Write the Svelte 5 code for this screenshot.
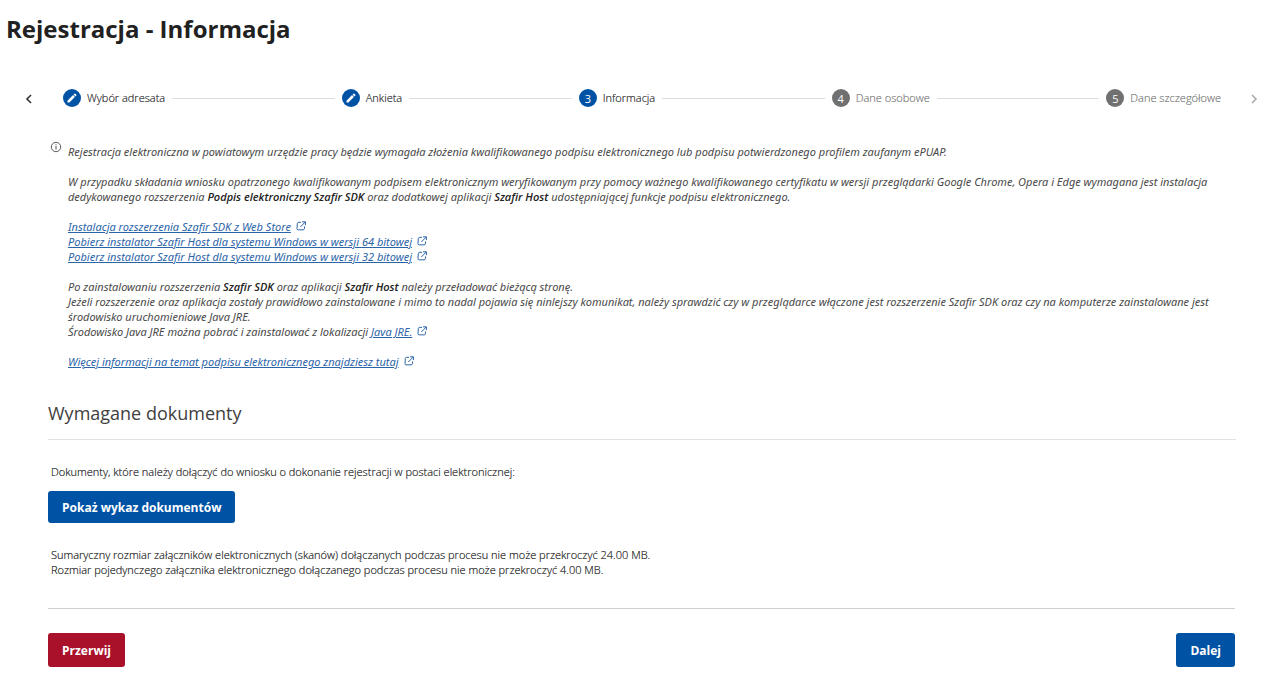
<script>
  const steps = [
    { label: 'Wybór adresata', state: 'done' },
    { label: 'Ankieta', state: 'done' },
    { label: 'Informacja', state: 'current' },
    { label: 'Dane osobowe', state: 'todo' },
    { label: 'Dane szczegółowe', state: 'todo' }
  ];
</script>

{#snippet external()}
  <svg class="external" viewBox="0 0 12 12" aria-hidden="true">
    <path d="M6 1.6H3.2Q1.8 1.6 1.6 3L1.2 9Q1.1 10.6 2.6 10.6H8.6Q9.9 10.6 10.1 9.2L10.3 6.5M7.2 1h4.1v4M11.3 1 5.2 7.2" fill="none" stroke="currentColor" stroke-width="1.2" />
  </svg>
{/snippet}

<main>
  <h1>Rejestracja - Informacja</h1>

  <nav aria-label="Etapy rejestracji">
    <button class="arrow" aria-label="Poprzedni">
      <svg viewBox="0 0 8 12"><path d="M6 2 2 6l4 4" fill="none" stroke="currentColor" stroke-width="1.6" /></svg>
    </button>
    <ol>
      {#each steps as step, i}
        {#if i > 0}<li class="line" aria-hidden="true"></li>{/if}
        <li class="step {step.state}">
          <span class="badge">
            {#if step.state === 'done'}
              <svg viewBox="0 0 24 24" aria-hidden="true">
                <path d="M3 17.25V21h3.75L17.81 9.94l-3.75-3.75L3 17.25zM20.71 7.04a1 1 0 0 0 0-1.41l-2.34-2.34a1 1 0 0 0-1.41 0l-1.83 1.83 3.75 3.75 1.83-1.83z" fill="currentColor" />
              </svg>
            {:else}{i + 1}{/if}
          </span>
          <span class="label">{step.label}</span>
        </li>
      {/each}
    </ol>
    <button class="arrow next" aria-label="Następny" disabled>
      <svg viewBox="0 0 8 12"><path d="m2 2 4 4-4 4" fill="none" stroke="currentColor" stroke-width="1.6" /></svg>
    </button>
  </nav>

  <section class="info">
    <svg class="info-icon" viewBox="0 0 12 12" aria-hidden="true">
      <circle cx="6" cy="6" r="4.7" fill="none" stroke="currentColor" stroke-width="0.9" />
      <path d="M6 5.2v3.3M6 3.3v1.1" stroke="currentColor" stroke-width="1" />
    </svg>
    <div class="notice">
      <p>Rejestracja elektroniczna w powiatowym urzędzie pracy będzie wymagała złożenia kwalifikowanego podpisu elektronicznego lub podpisu potwierdzonego profilem zaufanym ePUAP.</p>
      <p>W przypadku składania wniosku opatrzonego kwalifikowanym podpisem elektronicznym weryfikowanym przy pomocy ważnego kwalifikowanego certyfikatu w wersji przeglądarki Google Chrome, Opera i Edge wymagana jest instalacja dedykowanego rozszerzenia <strong>Podpis elektroniczny Szafir SDK</strong> oraz dodatkowej aplikacji <strong>Szafir Host</strong> udostępniającej funkcje podpisu elektronicznego.</p>
      <p>
        <a href="#webstore">Instalacja rozszerzenia Szafir SDK z Web Store</a>{@render external()}<br />
        <a href="#win64">Pobierz instalator Szafir Host dla systemu Windows w wersji 64 bitowej</a>{@render external()}<br />
        <a href="#win32">Pobierz instalator Szafir Host dla systemu Windows w wersji 32 bitowej</a>{@render external()}
      </p>
      <p>
        Po zainstalowaniu rozszerzenia <strong>Szafir SDK</strong> oraz aplikacji <strong>Szafir Host</strong> należy przeładować bieżącą stronę.<br />
        Jeżeli rozszerzenie oraz aplikacja zostały prawidłowo zainstalowane i mimo to nadal pojawia się ninlejszy komunikat, należy sprawdzić czy w przeglądarce włączone jest rozszerzenie Szafir SDK oraz czy na komputerze zainstalowane jest środowisko uruchomieniowe Java JRE.<br />
        Środowisko Java JRE można pobrać i zainstalować z lokalizacji <a href="#jre">Java JRE.</a>{@render external()}
      </p>
      <p><a href="#more">Więcej informacji na temat podpisu elektronicznego znajdziesz tutaj</a>{@render external()}</p>
    </div>
  </section>

  <section class="docs">
    <h2>Wymagane dokumenty</h2>
    <p>Dokumenty, które należy dołączyć do wniosku o dokonanie rejestracji w postaci elektronicznej:</p>
    <button class="btn">Pokaż wykaz dokumentów</button>
    <p class="limits">
      Sumaryczny rozmiar załączników elektronicznych (skanów) dołączanych podczas procesu nie może przekroczyć 24.00 MB.<br />
      Rozmiar pojedynczego załącznika elektronicznego dołączanego podczas procesu nie może przekroczyć 4.00 MB.
    </p>
  </section>

  <footer>
    <button class="btn danger">Przerwij</button>
    <button class="btn">Dalej</button>
  </footer>
</main>

<style>
  :global(body) {
    background: #fff;
  }
  main {
    font: 11px/15px 'Open Sans', sans-serif;
    color: #484848;
  }
  h1 {
    margin: 0;
    padding: 13px 6px 0;
    font-size: 24px;
    line-height: 32px;
    font-weight: 700;
    color: #212121;
  }
  nav {
    display: flex;
    align-items: center;
    margin-top: 42px;
    padding: 0 20px 0 24px;
  }
  ol {
    flex: 1;
    display: flex;
    align-items: center;
    gap: 7px;
    margin: 0;
    padding: 0 28px;
    list-style: none;
  }
  .step {
    display: flex;
    align-items: center;
    gap: 6px;
    height: 22px;
    white-space: nowrap;
    font-weight: 350;
  }
  .label {
    padding-bottom: 2px;
    text-shadow: 0 0 0 currentColor;
  }
  .line {
    flex: 1;
    height: 1px;
    background: #dedede;
  }
  .badge {
    display: flex;
    align-items: center;
    justify-content: center;
    width: 18px;
    height: 18px;
    border-radius: 50%;
    background: #0052a5;
    color: #fff;
    font-weight: 400;
  }
  .badge svg {
    width: 12px;
    height: 12px;
  }
  .todo {
    color: #8c8c8c;
  }
  .todo .badge {
    background: #707070;
  }
  .arrow {
    display: flex;
    width: 11px;
    padding: 2px 1px 0;
    border: 0;
    background: none;
    color: #333;
  }
  .arrow svg {
    width: 8px;
    height: 12px;
  }
  .next {
    color: #aaa;
  }
  .info {
    display: flex;
    gap: 6px;
    padding: 32px 44px 0 50px;
  }
  .info-icon {
    flex: none;
    width: 12px;
    height: 12px;
  }
  .notice {
    padding-top: 3px;
    font-family: 'Noto Sans', 'Open Sans', sans-serif;
    font-style: italic;
  }
  p {
    margin: 0;
  }
  .notice p + p {
    margin-top: 15px;
  }
  strong {
    font-family: 'Open Sans', sans-serif;
    font-weight: 600;
    color: #222;
  }
  a {
    color: #2c64a8;
    text-decoration: underline;
  }
  .external {
    width: 10px;
    height: 10px;
    margin-left: 5px;
    color: #2c64a8;
    vertical-align: 0;
  }
  .docs {
    padding: 31px 44px 0 48px;
  }
  h2 {
    margin: 0 0 24px;
    padding-bottom: 13px;
    border-bottom: 1px solid #e2e2e2;
    font-size: 18px;
    line-height: 26px;
    font-weight: 400;
    color: #404040;
  }
  .docs p {
    padding-left: 3px;
    font-weight: 300;
    color: #404040;
    text-shadow: 0 0 0 currentColor;
  }
  .btn {
    height: 32px;
    padding: 2px 14px 0;
    border: 0;
    border-radius: 3px;
    background: #0052a5;
    color: #fff;
    font: 700 12px/16px 'Open Sans', sans-serif;
  }
  .docs .btn {
    margin-top: 12px;
  }
  .docs .limits {
    margin-top: 24px;
  }
  footer {
    display: flex;
    justify-content: space-between;
    margin: 31px 45px 0 48px;
    padding: 24px 0 15px;
    border-top: 1px solid #d0d0d0;
  }
  footer .btn {
    height: 34px;
  }
  .btn.danger {
    background: #a9112b;
  }
</style>
